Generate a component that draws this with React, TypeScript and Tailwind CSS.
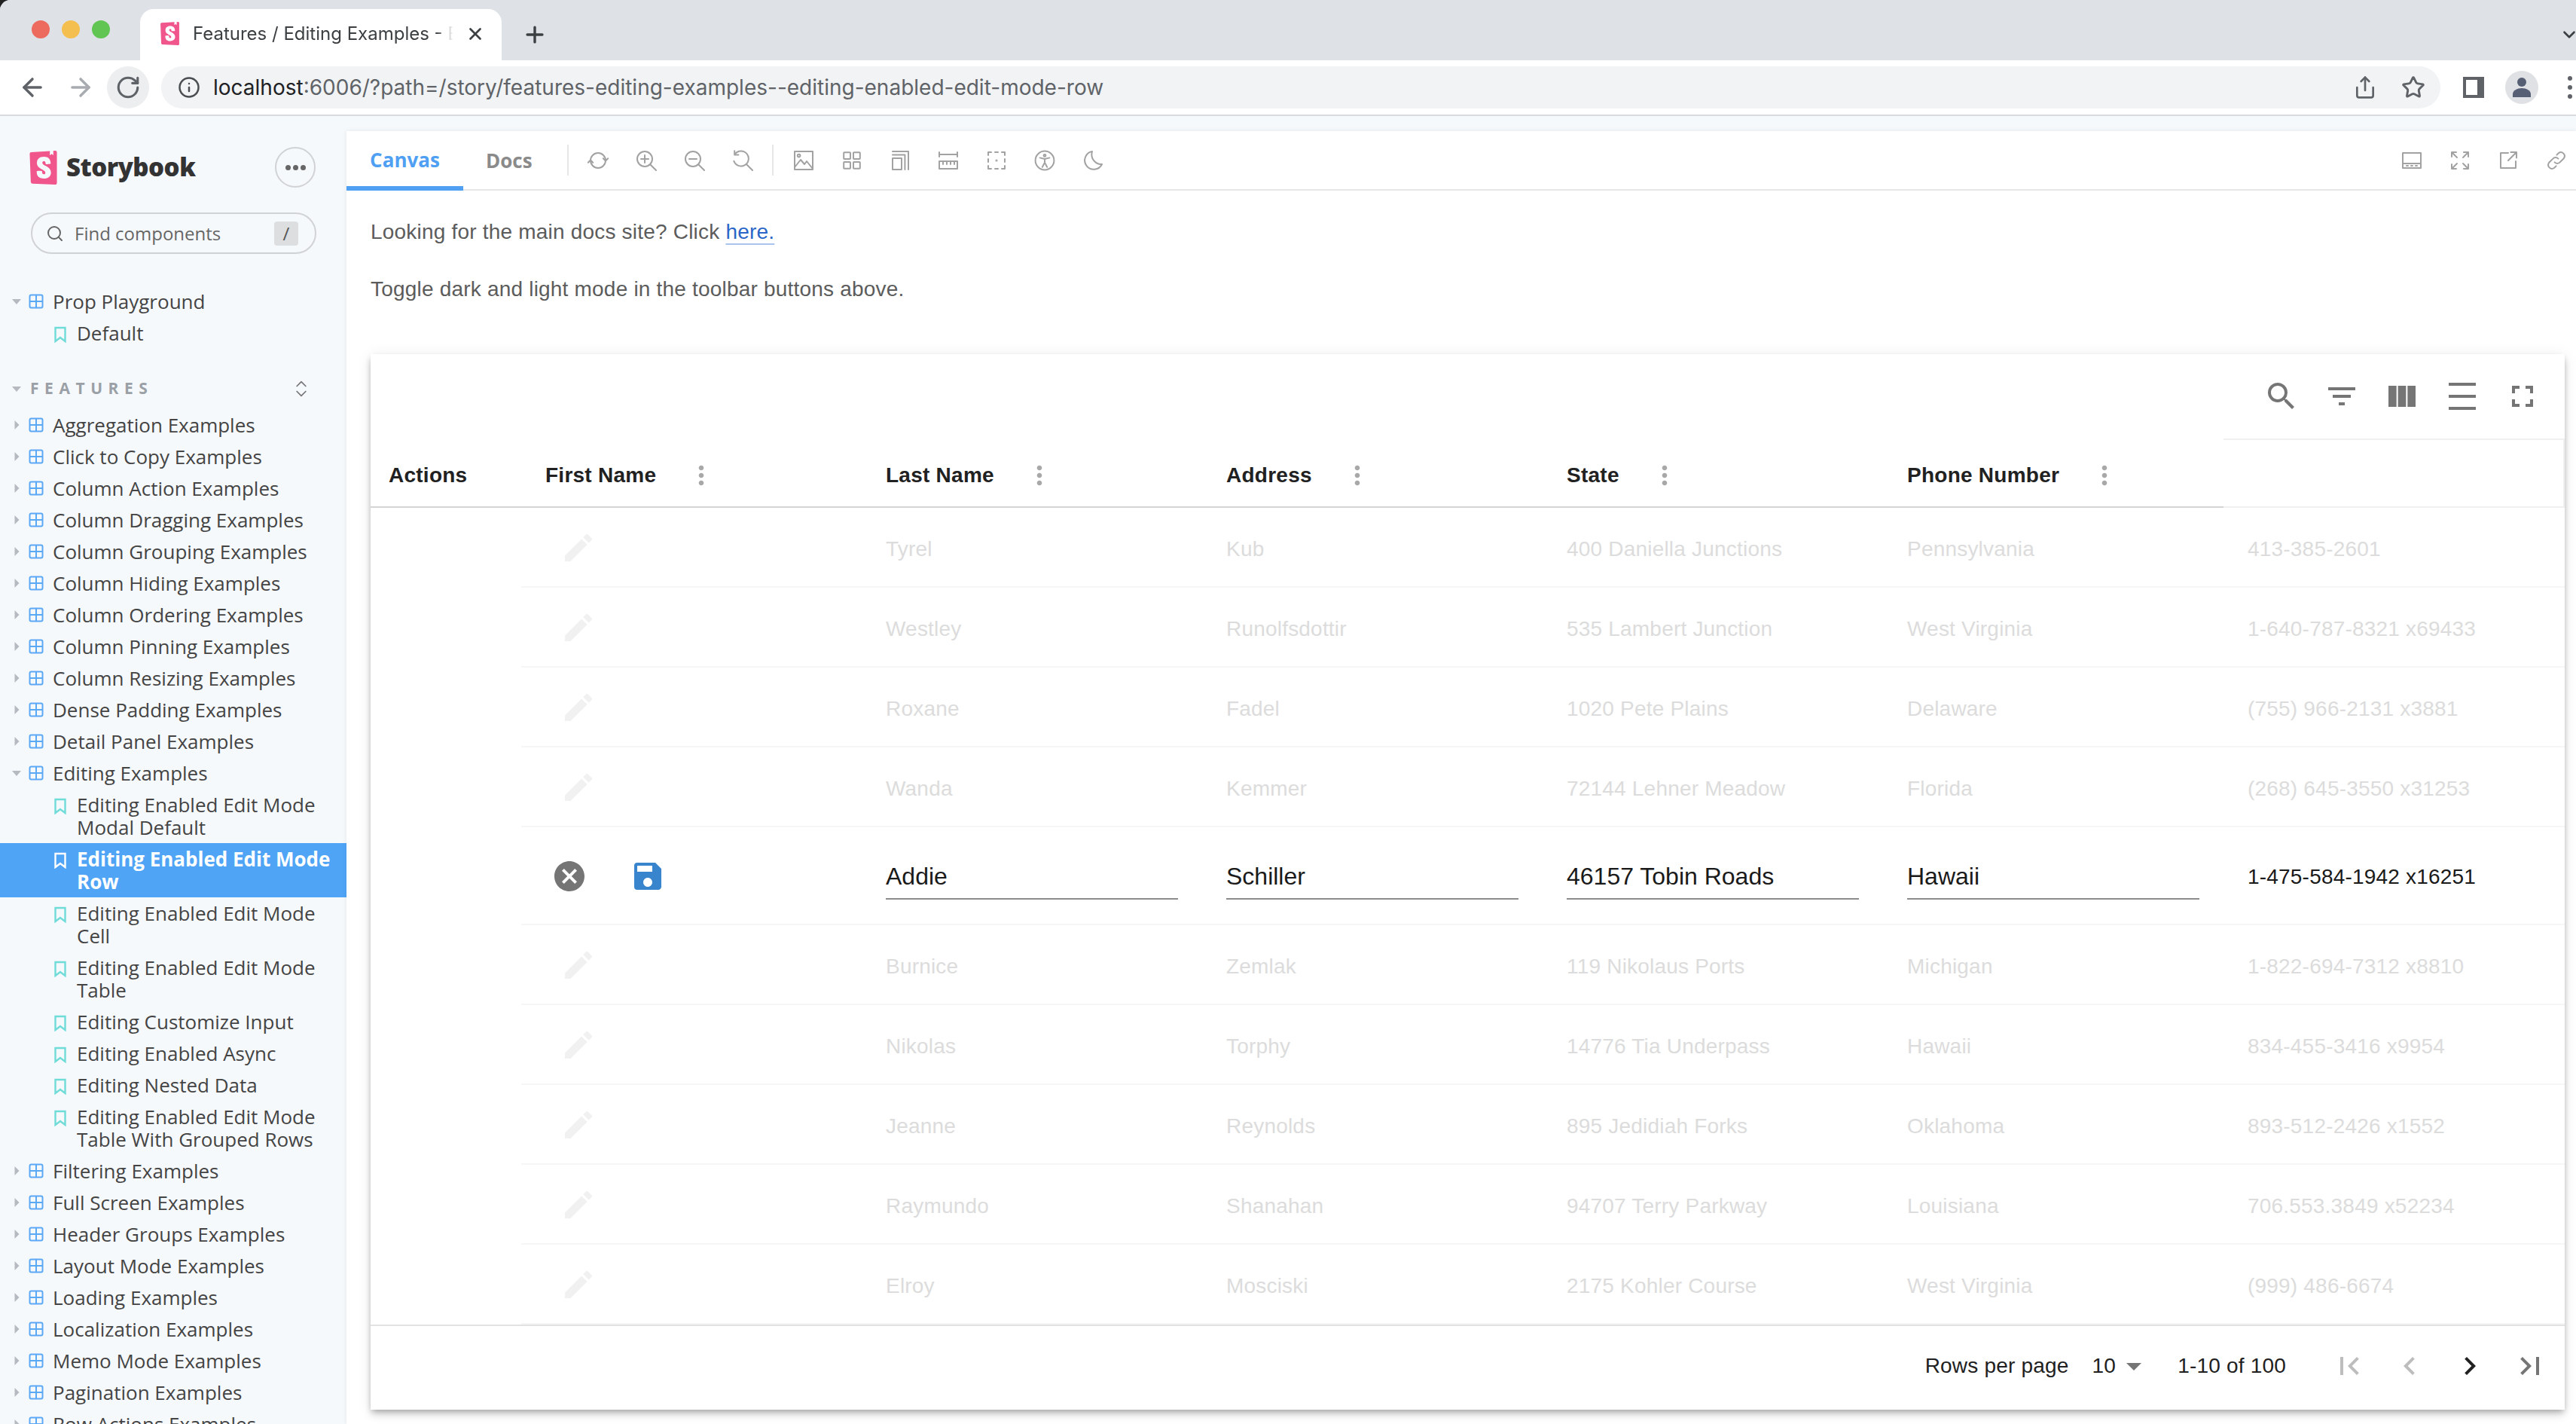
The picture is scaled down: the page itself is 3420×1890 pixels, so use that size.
import React from "react";
import { ArrowLeft, ArrowRight, ChevronDown, ChevronsUpDown, Info, Plus, RotateCw, Search, Share, Star, X } from "lucide-react";
import { SiStorybook } from "react-icons/si";
import {
  MdArrowDropDown,
  MdCancel,
  MdChevronLeft,
  MdChevronRight,
  MdDensityMedium,
  MdEdit,
  MdFilterList,
  MdFirstPage,
  MdFullscreen,
  MdLastPage,
  MdMoreVert,
  MdSave,
  MdSearch,
  MdViewColumn,
} from "react-icons/md";

type NavItem = { label: string; kind: "group" | "story"; open?: boolean; active?: boolean };

const topItems: NavItem[] = [
  { label: "Prop Playground", kind: "group", open: true },
  { label: "Default", kind: "story" },
];

const featureItems: NavItem[] = [
  { label: "Aggregation Examples", kind: "group" },
  { label: "Click to Copy Examples", kind: "group" },
  { label: "Column Action Examples", kind: "group" },
  { label: "Column Dragging Examples", kind: "group" },
  { label: "Column Grouping Examples", kind: "group" },
  { label: "Column Hiding Examples", kind: "group" },
  { label: "Column Ordering Examples", kind: "group" },
  { label: "Column Pinning Examples", kind: "group" },
  { label: "Column Resizing Examples", kind: "group" },
  { label: "Dense Padding Examples", kind: "group" },
  { label: "Detail Panel Examples", kind: "group" },
  { label: "Editing Examples", kind: "group", open: true },
  { label: "Editing Enabled Edit Mode\nModal Default", kind: "story" },
  { label: "Editing Enabled Edit Mode\nRow", kind: "story", active: true },
  { label: "Editing Enabled Edit Mode\nCell", kind: "story" },
  { label: "Editing Enabled Edit Mode\nTable", kind: "story" },
  { label: "Editing Customize Input", kind: "story" },
  { label: "Editing Enabled Async", kind: "story" },
  { label: "Editing Nested Data", kind: "story" },
  { label: "Editing Enabled Edit Mode\nTable With Grouped Rows", kind: "story" },
  { label: "Filtering Examples", kind: "group" },
  { label: "Full Screen Examples", kind: "group" },
  { label: "Header Groups Examples", kind: "group" },
  { label: "Layout Mode Examples", kind: "group" },
  { label: "Loading Examples", kind: "group" },
  { label: "Localization Examples", kind: "group" },
  { label: "Memo Mode Examples", kind: "group" },
  { label: "Pagination Examples", kind: "group" },
  { label: "Row Actions Examples", kind: "group" },
];

const rowsBefore = [
  ["Tyrel", "Kub", "400 Daniella Junctions", "Pennsylvania", "413-385-2601"],
  ["Westley", "Runolfsdottir", "535 Lambert Junction", "West Virginia", "1-640-787-8321 x69433"],
  ["Roxane", "Fadel", "1020 Pete Plains", "Delaware", "(755) 966-2131 x3881"],
  ["Wanda", "Kemmer", "72144 Lehner Meadow", "Florida", "(268) 645-3550 x31253"],
];

const rowsAfter = [
  ["Burnice", "Zemlak", "119 Nikolaus Ports", "Michigan", "1-822-694-7312 x8810"],
  ["Nikolas", "Torphy", "14776 Tia Underpass", "Hawaii", "834-455-3416 x9954"],
  ["Jeanne", "Reynolds", "895 Jedidiah Forks", "Oklahoma", "893-512-2426 x1552"],
  ["Raymundo", "Shanahan", "94707 Terry Parkway", "Louisiana", "706.553.3849 x52234"],
  ["Elroy", "Mosciski", "2175 Kohler Course", "West Virginia", "(999) 486-6674"],
];

function GroupIcon() {
  return (
    <svg width="20" height="20" viewBox="0 0 20 20" fill="none" stroke="#5ba8f5" strokeWidth="2" className="shrink-0">
      <rect x="1.5" y="1.5" width="17" height="17" rx="2" />
      <path d="M10 1.5v17M1.5 10h17" />
    </svg>
  );
}

function StoryIcon({ white }: { white?: boolean }) {
  return (
    <svg width="16" height="22" viewBox="0 0 16 22" fill="none" stroke={white ? "#ffffff" : "#6fdcd8"} strokeWidth="2.4" className="shrink-0">
      <path d="M1.5 2h13v18l-6.5-5-6.5 5z" />
    </svg>
  );
}

function Caret({ open }: { open?: boolean }) {
  return (
    <svg width="14" height="14" viewBox="0 0 14 14" fill="#b4bac0" className="shrink-0">
      {open ? <path d="M1 4h12l-6 7z" /> : <path d="M4.5 1l6 6-6 6z" />}
    </svg>
  );
}

function SideItem({ item }: { item: NavItem }) {
  if (item.kind === "group") {
    return (
      <div className="flex h-[42px] items-center pl-[15px] text-[#444]">
        <Caret open={item.open} />
        <span className="ml-[9px]">
          <GroupIcon />
        </span>
        <span className="ml-[12px] whitespace-nowrap text-[26px] leading-[30px]">{item.label}</span>
      </div>
    );
  }
  return (
    <div className={"flex items-start py-[6px] pl-[72px] " + (item.active ? "bg-[#4fa4f6] text-white" : "text-[#444]")}>
      <span className="mt-[6px]">
        <StoryIcon white={item.active} />
      </span>
      <span className={"ml-[14px] whitespace-pre-line text-[26px] leading-[30px] " + (item.active ? "font-bold" : "")}>{item.label}</span>
    </div>
  );
}

function Sidebar() {
  return (
    <aside className="h-[1736px] w-[460px] shrink-0 overflow-hidden bg-[#f6f9fc] pt-[41px] font-['Open_Sans',sans-serif]">
      <div className="flex h-[54px] items-center pr-[41px] pl-[35px]">
        <SiStorybook size={45} color="#f0558b" />
        <span className="ml-[8px] text-[33px] font-extrabold tracking-[-0.5px] text-[#333]">Storybook</span>
        <div className="ml-auto flex size-[54px] items-center justify-center rounded-full border-2 border-[#d0d2d4]">
          <div className="flex gap-[3px]">
            <span className="size-[7px] rounded-full bg-[#666]" />
            <span className="size-[7px] rounded-full bg-[#666]" />
            <span className="size-[7px] rounded-full bg-[#666]" />
          </div>
        </div>
      </div>
      <div className="mt-[33px] ml-[41px] flex h-[55px] w-[379px] items-center rounded-full border-2 border-[#d0d2d4] pr-[22px] pl-[18px]">
        <Search size={24} color="#666" strokeWidth={2} />
        <span className="ml-[14px] text-[24px] text-[#666]">Find components</span>
        <span className="ml-auto flex h-[32px] w-[32px] items-center justify-center rounded-[4px] bg-[#dcdee0] text-[24px] text-[#555]">/</span>
      </div>
      <div className="mt-[42px]">
        {topItems.map((item) => (
          <SideItem key={item.label} item={item} />
        ))}
      </div>
      <div className="mt-[32px] flex h-[42px] items-center pr-[46px] pl-[15px]">
        <Caret open />
        <span className="ml-[11px] text-[21px] font-bold tracking-[0.36em] text-[#9aa0a6]">FEATURES</span>
        <ChevronsUpDown size={28} color="#777" strokeWidth={1.5} className="ml-auto" />
      </div>
      <div className="mt-[6px]">
        {featureItems.map((item) => (
          <SideItem key={item.label} item={item} />
        ))}
      </div>
    </aside>
  );
}

function Tool({ children }: { children: React.ReactNode }) {
  return (
    <svg width="28" height="28" viewBox="0 0 14 14" fill="none" stroke="#a2a2a2" strokeWidth="1" strokeLinecap="round" strokeLinejoin="round">
      {children}
    </svg>
  );
}

function ToolCell({ children }: { children: React.ReactNode }) {
  return <div className="flex w-[64px] items-center justify-center">{children}</div>;
}

function StoryToolbar() {
  return (
    <div className="flex h-[79px] shrink-0 items-stretch border-b-2 border-[#e6e6e6] font-['Open_Sans',sans-serif]">
      <div className="-mb-[2px] flex w-[155px] items-center justify-center border-b-[6px] border-[#4f9ff2] pt-[3px] text-[26px] font-bold text-[#4f9ff2]">Canvas</div>
      <div className="ml-[30px] flex items-center pt-[1px] text-[26px] font-bold text-[#8a8a8a]">Docs</div>
      <div className="ml-[46px] my-[18px] w-[2px] bg-[#e6e6e6]" />
      <div className="flex items-center pl-[7px]">
        <ToolCell>
          <Tool>
            <path d="M7 2a5 5 0 0 1 5 5M7 12a5 5 0 0 1-5-5M10.4 5.6 12 7.3l1.6-1.7M.4 8.4 2 6.7l1.6 1.7M2 7a5 5 0 0 1 5-5M12 7a5 5 0 0 1-5 5" />
          </Tool>
        </ToolCell>
        <ToolCell>
          <Tool>
            <circle cx="6" cy="6" r="5" />
            <path d="m9.6 9.6 3.9 3.9M6 3.5v5M3.5 6h5" />
          </Tool>
        </ToolCell>
        <ToolCell>
          <Tool>
            <circle cx="6" cy="6" r="5" />
            <path d="m9.6 9.6 3.9 3.9M3.5 6h5" />
          </Tool>
        </ToolCell>
        <ToolCell>
          <Tool>
            <path d="M2 2.6A5 5 0 1 1 1.2 7.4M9.6 9.6l3.9 3.9M1.6.6v2.6h2.6" />
          </Tool>
        </ToolCell>
      </div>
      <div className="ml-[7px] my-[18px] w-[2px] bg-[#e6e6e6]" />
      <div className="flex items-center pl-[8px]">
        <ToolCell>
          <Tool>
            <rect x="1" y="1" width="12" height="12" />
            <circle cx="3.8" cy="3.8" r="0.9" />
            <path d="m1 11.5 4-5 2.5 3 1.5-2 4 5" />
          </Tool>
        </ToolCell>
        <ToolCell>
          <Tool>
            <rect x="1.6" y="1.6" width="4.4" height="4.4" rx="0.4" />
            <rect x="8" y="1.6" width="4.4" height="4.4" rx="0.4" />
            <rect x="1.6" y="8" width="4.4" height="4.4" rx="0.4" />
            <rect x="8" y="8" width="4.4" height="4.4" rx="0.4" />
          </Tool>
        </ToolCell>
        <ToolCell>
          <Tool>
            <path d="M2 1h10.5v12M2 3.2h8.2V13" />
            <rect x="2" y="5.5" width="6" height="7.5" />
          </Tool>
        </ToolCell>
        <ToolCell>
          <Tool>
            <path d="M1 3h12M1 1.5v3M13 1.5v3" />
            <rect x="1" y="7.5" width="12" height="5" />
            <path d="M3.5 7.5v2M6 7.5v2M8.5 7.5v2M11 7.5v2" />
          </Tool>
        </ToolCell>
        <ToolCell>
          <Tool>
            <path d="M1.5 1.5h2M6 1.5h2M10.5 1.5h2V3.5M12.5 6v2M12.5 10.5v2h-2M8 12.5H6M3.5 12.5h-2v-2M1.5 8V6M1.5 3.5v-2" />
            <circle cx="7" cy="7" r="0.3" />
          </Tool>
        </ToolCell>
        <ToolCell>
          <Tool>
            <circle cx="7" cy="7" r="6.2" />
            <circle cx="7" cy="3.7" r="0.7" />
            <path d="M3.8 5.2 7 6l3.2-.8M7 6v2.4M7 8.4l-1.6 3M7 8.4l1.6 3" />
          </Tool>
        </ToolCell>
        <ToolCell>
          <Tool>
            <path d="M6.5 1A6 6 0 1 0 13 9.5 6.5 6.5 0 0 1 6.5 1z" />
          </Tool>
        </ToolCell>
      </div>
      <div className="ml-auto -mr-[6px] flex items-center">
        <ToolCell>
          <Tool>
            <rect x="1" y="2" width="12" height="10" />
            <path d="M1 9h12M3.5 10.5h1M6.5 10.5h1M9.5 10.5h1" />
          </Tool>
        </ToolCell>
        <ToolCell>
          <Tool>
            <path d="M1.5 4.5v-3h3M1.5 1.5l3.5 3.5M9.5 1.5h3v3M12.5 1.5 9 5M1.5 9.5v3h3M1.5 12.5 5 9M12.5 9.5v3h-3M12.5 12.5 9 9" />
          </Tool>
        </ToolCell>
        <ToolCell>
          <Tool>
            <path d="M7 2H2v10h10V7.5M12.5 1.5 7 7M8.7 1.5h3.8v3.8" />
          </Tool>
        </ToolCell>
        <ToolCell>
          <Tool>
            <path d="M5.8 8.2a2.4 2.4 0 0 0 3.5 0l2.6-2.6a2.5 2.5 0 0 0-3.5-3.5L7.2 3.3" />
            <path d="M8.2 5.8a2.4 2.4 0 0 0-3.5 0L2.1 8.4a2.5 2.5 0 0 0 3.5 3.5l1.2-1.2" />
          </Tool>
        </ToolCell>
      </div>
    </div>
  );
}

function Cell({ children, width = "w-[452px]" }: { children: React.ReactNode; width?: string }) {
  return <div className={"flex items-center pl-[16px] " + width}>{children}</div>;
}

function DataRow({ row }: { row: string[] }) {
  return (
    <div className="ml-[200px] flex h-[106px] border-b-2 border-[#f6f6f6] text-[28px] tracking-[0.2px] text-[#dcdcdc]">
      <div className="flex w-[468px] items-center pt-[2px] pl-[52px]">
        <MdEdit size={48} color="#f1f1f1" />
      </div>
      <Cell width="w-[452px] pt-[6px]">{row[0]}</Cell>
      <Cell width="w-[452px] pt-[6px]">{row[1]}</Cell>
      <Cell width="w-[452px] pt-[6px]">{row[2]}</Cell>
      <Cell width="w-[452px] pt-[6px]">{row[3]}</Cell>
      <Cell width="w-[436px] pt-[6px]">{row[4]}</Cell>
    </div>
  );
}

function EditInput({ value }: { value: string }) {
  return (
    <Cell>
      <div className="flex h-[64px] w-[388px] items-center border-b-2 border-[#8c8c8c] pt-[3px] text-[32px] text-[#1a1a1a]">{value}</div>
    </Cell>
  );
}

function EditRow() {
  return (
    <div className="ml-[200px] flex h-[130px] border-b-2 border-[#f6f6f6]">
      <div className="flex w-[468px] items-center gap-[56px] pt-[2px] pl-[40px]">
        <MdCancel size={48} color="#757575" />
        <MdSave size={48} color="#3985cd" />
      </div>
      <EditInput value="Addie" />
      <EditInput value="Schiller" />
      <EditInput value="46157 Tobin Roads" />
      <EditInput value="Hawaii" />
      <Cell width="w-[436px] pt-[4px]">
        <span className="text-[28px] tracking-[0.2px] text-[#1a1a1a]">1-475-584-1942 x16251</span>
      </Cell>
    </div>
  );
}

function HeadCell({ label, width = "w-[452px]" }: { label: string; width?: string }) {
  return (
    <div className={"flex items-center pt-[8px] pl-[16px] " + width}>
      <span className="text-[28px] font-bold tracking-[0.25px] text-[#212121]">{label}</span>
      <MdMoreVert size={40} color="#a8a8a8" className="ml-[40px]" />
    </div>
  );
}

function Table() {
  return (
    <div className="flex h-[1401px] w-[2913px] flex-col bg-white shadow-[0_4px_8px_-2px_rgba(0,0,0,0.3),0_8px_10px_0_rgba(0,0,0,0.08),0_2px_20px_0_rgba(0,0,0,0.08)]">
      <div className="flex h-[112px] shrink-0 items-center justify-end gap-[32px] pr-[32px]">
        <MdSearch size={48} color="#757575" />
        <MdFilterList size={48} color="#757575" />
        <MdViewColumn size={48} color="#757575" />
        <MdDensityMedium size={48} color="#757575" />
        <MdFullscreen size={48} color="#757575" />
      </div>
      <div className="flex h-[92px] shrink-0">
        <div className="flex w-[2460px] border-b-2 border-[#d4d4d4]">
          <div className="flex w-[216px] items-center pt-[8px] pl-[24px] text-[28px] font-bold tracking-[0.25px] text-[#212121]">Actions</div>
          <HeadCell label="First Name" />
          <HeadCell label="Last Name" />
          <HeadCell label="Address" />
          <HeadCell label="State" />
          <HeadCell label="Phone Number" width="w-[436px]" />
        </div>
        <div className="grow border-y-2 border-r-2 border-[#f0f0f0]" />
      </div>
      {rowsBefore.map((row) => (
        <DataRow key={row[0]} row={row} />
      ))}
      <EditRow />
      {rowsAfter.map((row) => (
        <DataRow key={row[0]} row={row} />
      ))}
      <div className="flex h-[113px] shrink-0 items-center border-t-2 border-[#e2e2e2] pr-[22px] pb-[5px] text-[28px] tracking-[0.2px] text-[#212121]">
        <span className="ml-auto">Rows per page</span>
        <span className="ml-[31px]">10</span>
        <MdArrowDropDown size={48} color="#757575" />
        <span className="ml-[34px]">1-10 of 100</span>
        <div className="ml-[60px] flex gap-[32px]">
          <MdFirstPage size={48} color="#bdbdbd" />
          <MdChevronLeft size={48} color="#bdbdbd" />
          <MdChevronRight size={48} color="#212121" />
          <MdLastPage size={48} color="#757575" />
        </div>
      </div>
    </div>
  );
}

function BrowserChrome() {
  return (
    <div className="shrink-0 font-['Inter',sans-serif]">
      <div className="flex h-[80px] items-end bg-[#dee1e6] pl-[42px]">
        <div className="mb-[29px] flex gap-[16px] self-end">
          <span className="size-[24px] rounded-full bg-[#ed6a5e]" />
          <span className="size-[24px] rounded-full bg-[#f4bf4f]" />
          <span className="size-[24px] rounded-full bg-[#61c554]" />
        </div>
        <div className="ml-[40px] flex h-[68px] w-[480px] items-center rounded-t-[18px] bg-white pb-[3px] pl-[24px]">
          <SiStorybook size={31} color="#f0558b" />
          <span className="ml-[15px] w-[360px] overflow-hidden whitespace-nowrap text-[24px] text-[#3c4043] [mask-image:linear-gradient(to_right,black_90%,transparent_96%)]">
            Features / Editing Examples - Editing Enabled
          </span>
          <X size={26} color="#3c4043" strokeWidth={2.5} className="ml-[2px] shrink-0" />
        </div>
        <Plus size={34} color="#3c4043" strokeWidth={2.4} className="mb-[17px] ml-[27px]" />
        <ChevronDown size={26} color="#3c4043" strokeWidth={2.4} className="mb-[21px] ml-auto -mr-[4px]" />
      </div>
      <div className="flex h-[74px] items-center border-b-2 border-[#d8dadd] bg-white pl-[24px]">
        <ArrowLeft size={38} color="#5f6368" strokeWidth={2.2} />
        <ArrowRight size={38} color="#a8abaf" strokeWidth={2.2} className="ml-[26px]" />
        <div className="ml-[16px] flex size-[56px] items-center justify-center rounded-full bg-[#eceef0]">
          <RotateCw size={34} color="#5f6368" strokeWidth={2.2} />
        </div>
        <div className="ml-[16px] flex h-[56px] w-[3026px] items-center rounded-full bg-[#f1f3f4] pl-[22px] text-[28px]">
          <Info size={30} color="#4a4d51" strokeWidth={2} />
          <span className="ml-[17px] text-[#202124]">localhost</span>
          <span className="text-[#5f6368]">:6006/?path=/story/features-editing-examples--editing-enabled-edit-mode-row</span>
          <Share size={32} color="#5f6368" strokeWidth={2} className="ml-auto" />
          <Star size={32} color="#5f6368" strokeWidth={2.2} className="mr-[20px] ml-[32px]" />
        </div>
        <svg width="28" height="28" viewBox="0 0 28 28" className="ml-[30px] shrink-0">
          <path d="M0 0h28v28H0z" fill="#5f6368" />
          <path d="M4 4h15v20H4z" fill="#ffffff" />
        </svg>
        <div className="ml-[28px] flex size-[44px] items-center justify-center rounded-full bg-[#dfe1e5]">
          <svg width="28" height="30" viewBox="0 0 28 30" fill="#565f73">
            <circle cx="14" cy="8" r="6" />
            <path d="M2 28v-4c0-5 6-8 12-8s12 3 12 8v4z" />
          </svg>
        </div>
        <div className="ml-[39px] flex flex-col gap-[6px]">
          <span className="size-[6px] rounded-full bg-[#5f6368]" />
          <span className="size-[6px] rounded-full bg-[#5f6368]" />
          <span className="size-[6px] rounded-full bg-[#5f6368]" />
        </div>
      </div>
    </div>
  );
}

export default function App() {
  return (
    <div className="h-[1890px] w-[3420px] overflow-hidden bg-[#222]">
      <div className="flex h-full flex-col overflow-hidden rounded-tl-[14px] bg-white font-['Liberation_Sans',sans-serif]">
        <BrowserChrome />
        <div className="flex grow overflow-hidden">
          <Sidebar />
          <div className="flex grow flex-col bg-[#f6f9fc] pt-[20px]">
            <div className="flex grow flex-col bg-white shadow-[0_0_6px_rgba(0,0,0,0.08)]">
              <StoryToolbar />
              <div className="pr-[15px] pl-[32px]">
                <p className="mt-[35px] text-[28px] leading-[40px] tracking-[0.2px] text-[#5c5c5c]">
                  Looking for the main docs site? Click{" "}
                  <a className="text-[#2a66c7] underline decoration-[#a8c3ec] underline-offset-[6px]">here.</a>
                </p>
                <p className="mt-[36px] text-[28px] leading-[40px] tracking-[0.2px] text-[#5c5c5c]">Toggle dark and light mode in the toolbar buttons above.</p>
                <div className="mt-[66px]">
                  <Table />
                </div>
              </div>
            </div>
          </div>
        </div>
      </div>
    </div>
  );
}
